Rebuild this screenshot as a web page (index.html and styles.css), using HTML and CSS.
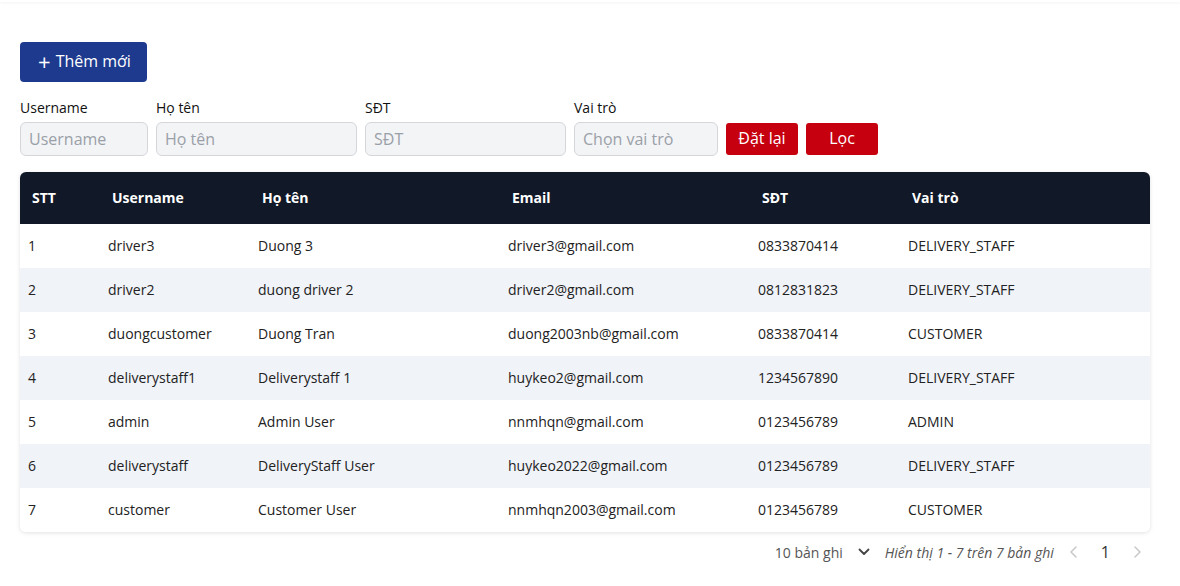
FILE: index.html
```html
<!DOCTYPE html>
<html lang="vi">
<head>
<meta charset="utf-8">
<title>Người dùng</title>
<link rel="stylesheet" href="styles.css">
</head>
<body>
<div class="topbar"></div>
<main class="page">
  <div class="actions">
    <button class="btn-add"><span class="plus">+</span>Thêm mới</button>
  </div>
  <form class="filters">
    <label class="field f-user"><span class="lbl">Username</span><input placeholder="Username"></label>
    <label class="field f-name"><span class="lbl">Họ tên</span><input placeholder="Họ tên"></label>
    <label class="field f-phone"><span class="lbl">SĐT</span><input placeholder="SĐT"></label>
    <label class="field f-role"><span class="lbl">Vai trò</span><input placeholder="Chọn vai trò"></label>
    <button type="button" class="btn-red">Đặt lại</button>
    <button type="button" class="btn-red">Lọc</button>
  </form>
  <div class="table-wrap">
    <table class="grid">
      <colgroup>
        <col class="c1"><col class="c2"><col class="c3"><col class="c4"><col class="c5"><col class="c6">
      </colgroup>
      <thead>
        <tr><th>STT</th><th>Username</th><th>Họ tên</th><th>Email</th><th>SĐT</th><th>Vai trò</th></tr>
      </thead>
      <tbody>
        <tr><td>1</td><td>driver3</td><td>Duong 3</td><td>driver3@gmail.com</td><td>0833870414</td><td>DELIVERY_STAFF</td></tr>
        <tr><td>2</td><td>driver2</td><td>duong driver 2</td><td>driver2@gmail.com</td><td>0812831823</td><td>DELIVERY_STAFF</td></tr>
        <tr><td>3</td><td>duongcustomer</td><td>Duong Tran</td><td>duong2003nb@gmail.com</td><td>0833870414</td><td>CUSTOMER</td></tr>
        <tr><td>4</td><td>deliverystaff1</td><td>Deliverystaff 1</td><td>huykeo2@gmail.com</td><td>1234567890</td><td>DELIVERY_STAFF</td></tr>
        <tr><td>5</td><td>admin</td><td>Admin User</td><td>nnmhqn@gmail.com</td><td>0123456789</td><td>ADMIN</td></tr>
        <tr><td>6</td><td>deliverystaff</td><td>DeliveryStaff User</td><td>huykeo2022@gmail.com</td><td>0123456789</td><td>DELIVERY_STAFF</td></tr>
        <tr><td>7</td><td>customer</td><td>Customer User</td><td>nnmhqn2003@gmail.com</td><td>0123456789</td><td>CUSTOMER</td></tr>
      </tbody>
    </table>
  </div>
  <div class="pager">
    <div class="size">10 bản ghi
      <svg class="chev-down" width="14" height="14" viewBox="0 0 14 14"><path d="M2.5 4.5 7 9l4.5-4.5" fill="none" stroke="#444" stroke-width="1.8" stroke-linecap="round" stroke-linejoin="round"/></svg>
    </div>
    <div class="info">Hiển thị 1 - 7 trên 7 bản ghi</div>
    <div class="nav">
      <svg class="arrow" width="12" height="14" viewBox="0 0 12 14"><path d="M8 2 3 7l5 5" fill="none" stroke="#c8c8c8" stroke-width="1.5" stroke-linecap="round" stroke-linejoin="round"/></svg>
      <span class="num">1</span>
      <svg class="arrow" width="12" height="14" viewBox="0 0 12 14"><path d="M4 2l5 5-5 5" fill="none" stroke="#c8c8c8" stroke-width="1.5" stroke-linecap="round" stroke-linejoin="round"/></svg>
    </div>
  </div>
</main>
</body>
</html>
```
FILE: styles.css
```css
* { box-sizing: border-box; }
html, body { margin: 0; padding: 0; background: #fff; }
body {
  font-family: "Open Sans", "Noto Sans", sans-serif;
  color: #1f1f1f;
  font-size: 14px;
}
.topbar {
  height: 2px;
  box-shadow: 0 1px 3px rgba(0,0,0,0.06);
}
.page {
  padding: 40px 30px 20px 20px;
}
.actions { display: flex; }
.btn-add {
  height: 40px;
  width: 127px;
  background: #1d3a8f;
  color: #fff;
  border: 0;
  border-radius: 4px;
  font-family: inherit;
  font-size: 16px;
  display: flex;
  align-items: center;
  justify-content: center;
  gap: 5px;
  padding: 0 0 2px 2px;
}
.plus { font-size: 22px; line-height: 1; margin-top: -1px; }
.filters {
  margin-top: 16px;
  display: flex;
  align-items: flex-end;
  gap: 8px;
}
.field { display: flex; flex-direction: column; }
.lbl { font-size: 14px; line-height: 20px; margin-bottom: 4px; color: #111; }
.field input {
  height: 34px;
  background: #f3f4f6;
  border: 1px solid #d4d6da;
  border-radius: 6px;
  padding: 0 8px;
  font-family: inherit;
  font-size: 16px;
  color: #111;
  outline: none;
}
.field input::placeholder { color: #9aa0a8; }
.f-user input { width: 128px; }
.f-name input { width: 201px; }
.f-phone input { width: 201px; }
.f-role input { width: 144px; }
.btn-red {
  height: 32px;
  width: 72px;
  margin-bottom: 1px;
  background: #c6000f;
  color: #fff;
  border: 0;
  border-radius: 3px;
  font-family: inherit;
  font-size: 16px;
  padding: 0 0 2px;
}
.table-wrap {
  margin-top: 16px;
  border-radius: 6px;
  overflow: hidden;
  box-shadow: 0 1px 4px rgba(0,0,0,0.12);
}
.grid {
  width: 100%;
  border-collapse: collapse;
  table-layout: fixed;
}
.c1 { width: 80px; }
.c2 { width: 150px; }
.c3 { width: 250px; }
.c4 { width: 250px; }
.c5 { width: 150px; }
.grid thead tr { background: #111827; }
.grid th {
  height: 52px;
  padding: 0 12px 2px;
  text-align: left;
  color: #fff;
  font-weight: 700;
  font-size: 14px;
}
.grid td {
  height: 44px;
  padding: 0 8px 2px;
  font-size: 14px;
  color: #222;
}
.grid tbody tr:nth-child(even) { background: #f0f3f8; }
.grid tbody tr:nth-child(odd) { background: #fff; }
.pager {
  display: flex;
  justify-content: flex-end;
  align-items: center;
  height: 36px;
  margin-top: 2px;
  margin-right: 7px;
  color: #555;
  font-size: 14px;
}
.size { display: flex; align-items: center; gap: 14px; color: #555; }
.chev-down { display: block; }
.info { font-style: italic; margin-left: 14px; color: #555; }
.nav { display: flex; align-items: center; margin-left: 14px; }
.arrow { display: block; }
.num { font-size: 16px; color: #333; margin: 0 21px; }
```
